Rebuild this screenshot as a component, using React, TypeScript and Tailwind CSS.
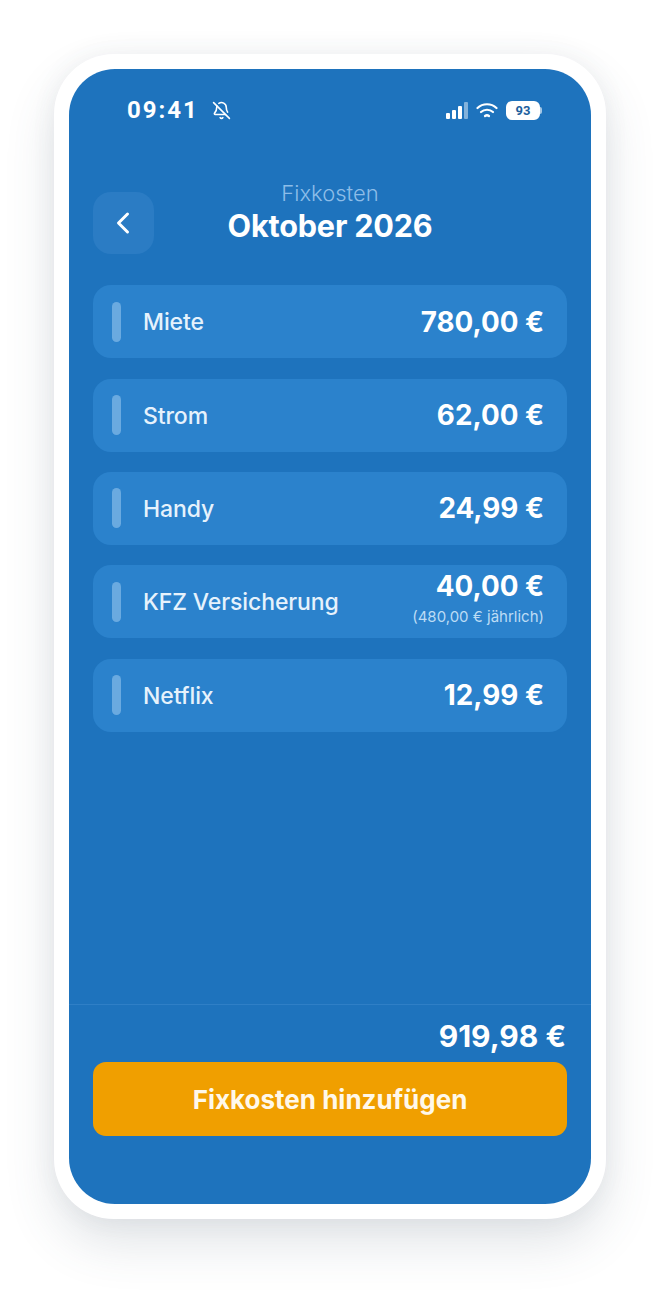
import { BellOff, ChevronLeft } from 'lucide-react'

const FONT = "font-['Inter','Noto_Sans',sans-serif]"

interface CostRowProps {
  name: string
  amount: string
  note?: string
}

const costs: CostRowProps[] = [
  { name: 'Miete', amount: '780,00 €' },
  { name: 'Strom', amount: '62,00 €' },
  { name: 'Handy', amount: '24,99 €' },
  { name: 'KFZ Versicherung', amount: '40,00 €', note: '(480,00 € jährlich)' },
  { name: 'Netflix', amount: '12,99 €' },
]

function CostRow({ name, amount, note }: CostRowProps) {
  return (
    <li className="flex h-[73px] items-center rounded-[18px] bg-[#2b82cc] pl-[19px] pr-[23px]">
      <span className="h-10 w-[9px] rounded-full bg-[#6aaae0]" />
      <span className="ml-[22px] flex-1 pt-[2px] text-[23px] leading-none font-medium tracking-[-0.1px] text-[#e6f2fc]">{name}</span>
      <div className="flex flex-col items-end">
        <span className="text-[27.8px] leading-[32px] font-bold text-white">{amount}</span>
        {note && <span className="-mt-[1px] text-[15px] leading-[32px] font-normal text-[#bcdcf5]">{note}</span>}
      </div>
    </li>
  )
}

function StatusIcons() {
  return (
    <div className="mb-[5px] flex items-center gap-[8px]">
      <svg className="h-[18px] w-[23px]" viewBox="0 0 23 18" fill="white" aria-hidden="true">
        <rect x="1" y="11" width="4" height="6" rx="1" />
        <rect x="7" y="8" width="4" height="9" rx="1" />
        <rect x="13" y="4" width="4" height="13" rx="1" />
        <rect x="19" y="0" width="4" height="17" rx="1" fillOpacity="0.45" />
      </svg>
      <svg className="h-[18px] w-[22px]" viewBox="0 0 22 18" fill="none" stroke="white" strokeWidth="2.2" strokeLinecap="round" aria-hidden="true">
        <path d="M1.5 6C6.8 1 15.2 1 20.5 6" />
        <path d="M5 10c3.3-3 8.7-3 12 0" />
        <path d="M9 14c1.2-.9 2.8-.9 4 0" />
      </svg>
      <div className="flex items-center">
        <span className="flex h-[19px] w-[34px] items-center justify-center rounded-[6px] bg-white font-['Roboto',sans-serif] text-[13px] font-bold text-[#1e5f9e]">93</span>
        <span className="h-[7px] w-[2px] rounded-r-full bg-white/60" />
      </div>
    </div>
  )
}

export default function App() {
  return (
    <div className={`${FONT} flex h-[1293px] w-[660px] items-start justify-center overflow-hidden bg-white pt-[54px]`}>
      {/* Phone frame */}
      <div className="h-[1165px] w-[552px] rounded-[60px] bg-white p-[15px] shadow-[0_24px_50px_rgba(70,85,105,0.16),0_0_24px_rgba(70,85,105,0.07)]">
        <div className="flex h-[1135px] flex-col rounded-[46px] bg-[#1e73bd]">
          {/* Status bar */}
          <div className="flex h-[57px] items-end justify-between pr-[49px] pl-[58px] pb-[1px]">
            <div className="flex items-center gap-[13px]">
              <span className="font-['Roboto',sans-serif] text-[24px] leading-[30px] font-bold tracking-[2px] text-white">09:41</span>
              <BellOff size={19} color="white" strokeWidth={2} />
            </div>
            <StatusIcons />
          </div>

          {/* Header */}
          <div className="relative mt-[53px] h-[75px] px-6">
            <button type="button" aria-label="Zurück" className="absolute top-[13px] left-6 flex h-[62px] w-[61px] items-center justify-center rounded-[18px] bg-[#2b7cc4]">
              <ChevronLeft size={36} color="white" strokeWidth={2} className="-translate-x-[1px]" />
            </button>
            <div className="flex flex-col items-center">
              <span className="text-[22px] leading-[28px] font-light text-[#8dbde8]">Fixkosten</span>
              <span className="mt-[1px] text-[30.6px] leading-[36px] font-bold tracking-[-0.2px] text-white">Oktober 2026</span>
            </div>
          </div>

          {/* Fixed costs */}
          <ul className="mt-[31.4px] flex flex-col gap-[20.3px] px-6">
            {costs.map((cost) => (
              <CostRow key={cost.name} {...cost} />
            ))}
          </ul>

          {/* Footer */}
          <div className="mt-auto h-[200px] border-t border-[#2f7fc6] px-6">
            <div className="pt-[13px] pr-[1px] text-right text-[30px] leading-[36px] font-bold text-white">919,98 €</div>
            <button type="button" className="mt-[8px] h-[74px] w-full rounded-[13px] bg-[#f09f00] text-[26px] font-bold text-[#fff8ea]">
              Fixkosten hinzufügen
            </button>
          </div>
        </div>
      </div>
    </div>
  )
}
